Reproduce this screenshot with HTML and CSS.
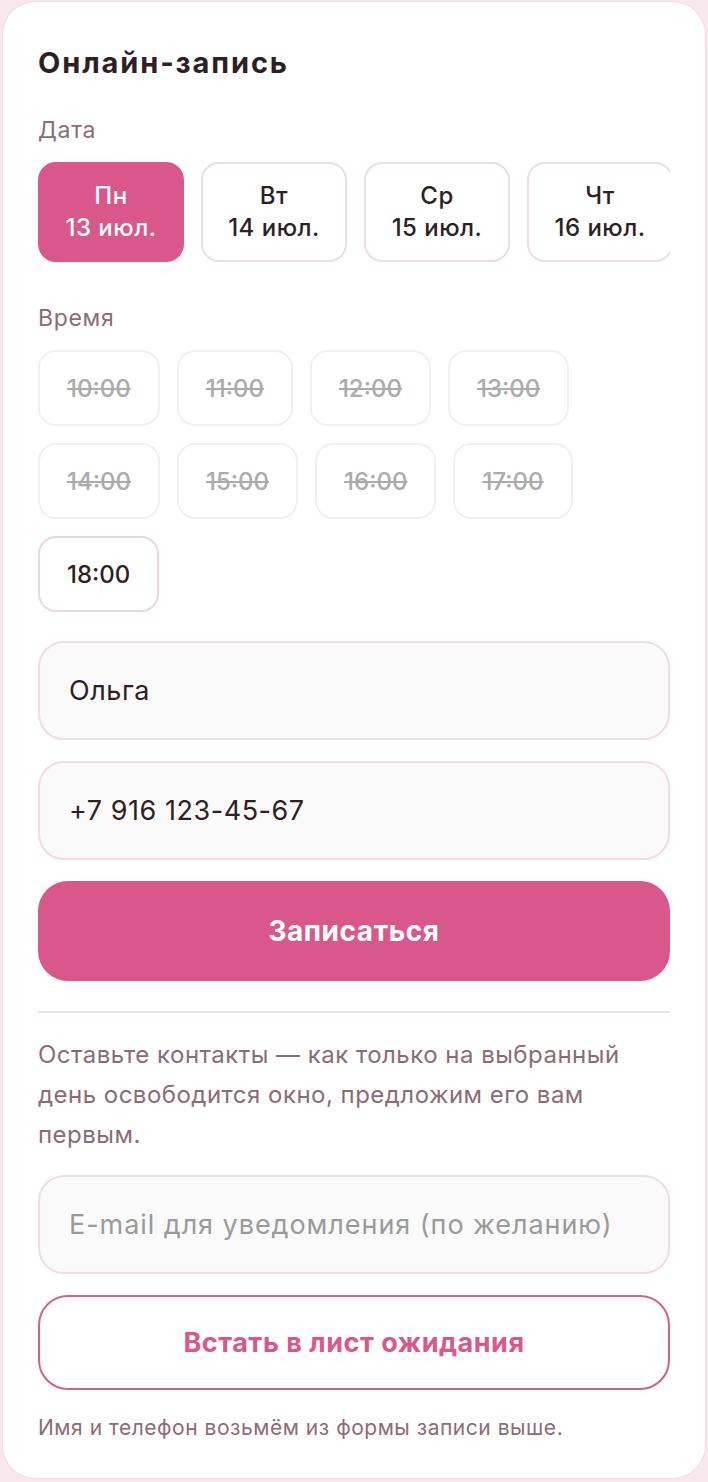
FILE: index.html
```html
<!DOCTYPE html>
<html lang="ru">
<head>
    <meta charset="UTF-8">
    <meta name="viewport" content="width=device-width, initial-scale=1.0">
    <title>Онлайн-запись</title>
    <link rel="stylesheet" href="styles.css">
</head>
<body>
    <div class="booking">
        <h2 class="booking_title">Онлайн-запись</h2>

        <p class="field_label">Дата</p>
        <div class="date_row">
            <button class="date_chip active"><span>Пн</span><span>13 июл.</span></button>
            <button class="date_chip"><span>Вт</span><span>14 июл.</span></button>
            <button class="date_chip"><span>Ср</span><span>15 июл.</span></button>
            <button class="date_chip"><span>Чт</span><span>16 июл.</span></button>
        </div>

        <p class="field_label">Время</p>
        <div class="time_grid">
            <button class="time_chip busy">10:00</button>
            <button class="time_chip busy">11:00</button>
            <button class="time_chip busy">12:00</button>
            <button class="time_chip busy">13:00</button>
            <button class="time_chip busy">14:00</button>
            <button class="time_chip busy">15:00</button>
            <button class="time_chip busy">16:00</button>
            <button class="time_chip busy">17:00</button>
            <button class="time_chip">18:00</button>
        </div>

        <div class="form_fields">
            <input class="text_input" type="text" value="Ольга">
            <input class="text_input" type="tel" value="+7 916 123-45-67">
            <button class="btn_primary">Записаться</button>
        </div>

        <hr class="divider">

        <p class="waitlist_note">Оставьте контакты — как только на выбранный день освободится окно, предложим его вам первым.</p>

        <div class="form_fields">
            <input class="text_input" type="email" placeholder="E-mail для уведомления (по желанию)">
            <button class="btn_outline">Встать в лист ожидания</button>
        </div>

        <p class="footnote">Имя и телефон возьмём из формы записи выше.</p>
    </div>
</body>
</html>
```

FILE: styles.css
```css
* {
    margin: 0;
    padding: 0;
    box-sizing: border-box;
}

html, body {
    background-color: #f8e7ec;
    color: #2e1f25;
    font-family: 'Inter', 'Noto Sans', Arial, sans-serif;
}

body {
    padding: 1px 2px;
}

button, input {
    font-family: inherit;
}

.booking {
    background-color: #fff;
    border: 1px solid #f2dbe2;
    border-radius: 34px;
    padding: 36px 35px 36px;
}

.booking_title {
    font-size: 29px;
    font-weight: 700;
    line-height: 34px;
    letter-spacing: 0.065em;
    margin-top: 8px;
    color: #2e1f25;
}

.field_label {
    font-size: 23px;
    line-height: 28px;
    letter-spacing: 0.03em;
    color: #8c6b77;
    margin-top: 36px;
    margin-bottom: 18px;
}

/* даты — горизонтальная лента, край обрезан */
.date_row {
    display: flex;
    gap: 17px;
    overflow: hidden;
}

.date_chip {
    flex: 0 0 146px;
    height: 100px;
    display: flex;
    flex-direction: column;
    justify-content: center;
    align-items: center;
    background: #fff;
    border: 2px solid #f0dde3;
    border-radius: 18px;
    font-size: 24px;
    line-height: 32px;
    letter-spacing: 0.02em;
    font-weight: 500;
    color: #2e1f25;
}

.date_chip.active {
    background-color: #d9578a;
    border-color: #d9578a;
    color: #fff;
}

.date_row + .field_label {
    margin-top: 42px;
}

/* время */
.time_grid {
    display: flex;
    flex-wrap: wrap;
    gap: 17px;
}

.time_chip {
    height: 76px;
    padding: 0 27px;
    background: #fff;
    border: 2px solid #ecd6dd;
    border-radius: 18px;
    font-size: 24px;
    font-weight: 500;
    color: #2e1f25;
}

.time_chip.busy {
    border-color: #f4eeef;
    color: #ababab;
    text-decoration: line-through;
}

.form_fields {
    display: flex;
    flex-direction: column;
    gap: 21px;
    margin-top: 29px;
}

.text_input {
    width: 100%;
    height: 99px;
    padding: 0 29px;
    background-color: #fafafa;
    border: 2px solid #f0dde3;
    border-radius: 26px;
    font-size: 27px;
    letter-spacing: 0.02em;
    color: #2e1f25;
    outline: none;
}

.text_input[type="email"] {
    letter-spacing: 0.035em;
}

.text_input::placeholder {
    color: #9a9a9a;
}

.btn_primary {
    height: 100px;
    border: none;
    border-radius: 30px;
    background-color: #d9578a;
    color: #fff;
    font-size: 28px;
    font-weight: 700;
    letter-spacing: 0.02em;
}

.divider {
    border: none;
    border-top: 2px solid #f2dfe4;
    margin-top: 30px;
}

.waitlist_note {
    margin-top: 22px;
    font-size: 24px;
    line-height: 40px;
    letter-spacing: 0.02em;
    color: #8c6b77;
}

.waitlist_note + .form_fields {
    margin-top: 20px;
}

.btn_outline {
    height: 95px;
    border: 2px solid #d1618c;
    border-radius: 30px;
    background-color: #fff;
    color: #d9578a;
    font-size: 27px;
    font-weight: 700;
    letter-spacing: 0.02em;
}

.footnote {
    margin-top: 24px;
    font-size: 21px;
    line-height: 28px;
    letter-spacing: 0.025em;
    color: #8c6b77;
}
```
